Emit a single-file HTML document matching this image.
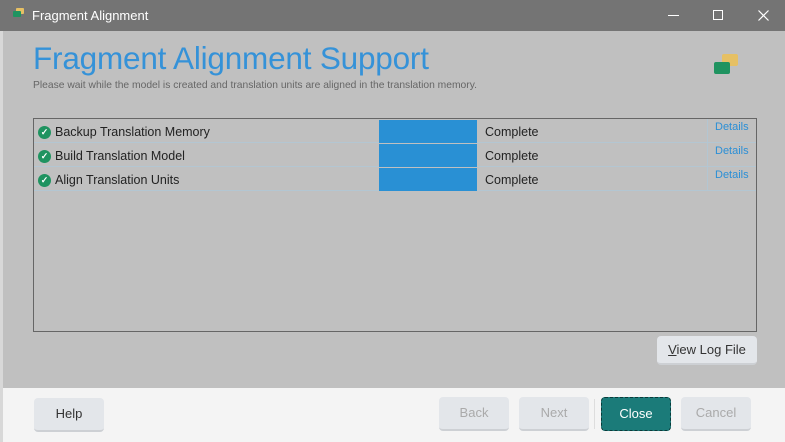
<!DOCTYPE html>
<html><head><style>
*{margin:0;padding:0;box-sizing:border-box}
body{width:785px;height:442px;overflow:hidden;background:#c0c0c0;font-family:"Liberation Sans",sans-serif;position:relative}
.abs{position:absolute}
.title{left:0;top:0;width:785px;height:31px;background:#747474;color:#fff;font-size:13px}
.row{left:34px;width:722px;height:24px;border-bottom:1px solid #b3c6d2;font-size:12.5px;color:#222}
.btn{position:absolute;height:34px;border-radius:4px;background:#e3e6ea;border-bottom:2px solid #cdd0d4;font-size:13px;text-align:center;line-height:32px;color:#333}
</style></head><body>
<div class="abs" style="left:0;top:0;width:3px;height:442px;background:#d8d8d8"></div>
<div class="abs title">
 <div class="abs" style="left:16px;top:8px;width:8px;height:6px;background:#e6c064;border-radius:1px"></div>
 <div class="abs" style="left:13px;top:11px;width:8px;height:6px;background:#1f9360;border-radius:1px"></div>
 <div class="abs" style="left:32px;top:8px">Fragment Alignment</div>
 <div class="abs" style="left:668px;top:15px;width:11px;height:1px;background:#fff"></div>
 <div class="abs" style="left:713px;top:10px;width:10px;height:10px;border:1px solid #fff"></div>
 <svg class="abs" style="left:758px;top:10px" width="11" height="11"><path d="M0.5 0.5L10.5 10.5M10.5 0.5L0.5 10.5" stroke="#fff" stroke-width="1.2"/></svg>
</div>
<div class="abs" style="left:33px;top:40px;font-size:31.5px;color:#3592d8;letter-spacing:-0.2px">Fragment Alignment Support</div>
<div class="abs" style="left:33px;top:80px;font-size:10.3px;color:#666">Please wait while the model is created and translation units are aligned in the translation memory.</div>
<div class="abs" style="left:722px;top:54px;width:16px;height:12px;background:#e6c064;border-radius:2px"></div>
<div class="abs" style="left:714px;top:62px;width:16px;height:12px;background:#1f9360;border-radius:2px"></div>
<div class="abs" style="left:33px;top:118px;width:724px;height:214px;border:1px solid #666"></div>
<div class="abs" style="left:707px;top:119px;width:1px;height:72px;background:#b3c6d2"></div>
<div class="abs row" style="top:119px"></div>
<div class="abs row" style="top:143px"></div>
<div class="abs row" style="top:167px"></div>
<div class="abs" style="left:379px;top:120px;width:98px;height:23px;background:#2990d4"></div>
<div class="abs" style="left:379px;top:144px;width:98px;height:23px;background:#2990d4"></div>
<div class="abs" style="left:379px;top:168px;width:98px;height:23px;background:#2990d4"></div>
<div class="abs" style="left:38px;top:124px;font-size:12.5px;color:#222;line-height:24px">
<div style="position:relative;top:-4px">
<div style="display:flex;align-items:center;height:24px"><span style="width:13px;height:13px;border-radius:50%;background:#1f9360;color:#fff;font-size:9px;line-height:13px;text-align:center;margin-right:4px;font-weight:bold">✓</span>Backup Translation Memory</div>
<div style="display:flex;align-items:center;height:24px"><span style="width:13px;height:13px;border-radius:50%;background:#1f9360;color:#fff;font-size:9px;line-height:13px;text-align:center;margin-right:4px;font-weight:bold">✓</span>Build Translation Model</div>
<div style="display:flex;align-items:center;height:24px"><span style="width:13px;height:13px;border-radius:50%;background:#1f9360;color:#fff;font-size:9px;line-height:13px;text-align:center;margin-right:4px;font-weight:bold">✓</span>Align Translation Units</div>
</div></div>
<div class="abs" style="left:485px;top:125px;font-size:12.5px;color:#222">Complete</div>
<div class="abs" style="left:485px;top:149px;font-size:12.5px;color:#222">Complete</div>
<div class="abs" style="left:485px;top:173px;font-size:12.5px;color:#222">Complete</div>
<div class="abs" style="left:715px;top:121px;font-size:11px;color:#2b8fd6">Details</div>
<div class="abs" style="left:715px;top:145px;font-size:11px;color:#2b8fd6">Details</div>
<div class="abs" style="left:715px;top:169px;font-size:11px;color:#2b8fd6">Details</div>
<div class="btn" style="left:657px;top:336px;width:100px;height:29px;line-height:27px"><u>V</u>iew Log File</div>
<div class="abs" style="left:3px;top:388px;width:782px;height:54px;background:#f4f4f4"></div>
<div class="btn" style="left:34px;top:398px;width:70px">Help</div>
<div class="btn" style="left:439px;top:397px;width:70px;color:#aaa">Back</div>
<div class="btn" style="left:519px;top:397px;width:70px;color:#aaa">Next</div>
<div class="abs" style="left:594px;top:399px;width:1px;height:30px;background:#ddd"></div>
<div class="btn" style="left:601px;top:397px;width:70px;background:#1b7b79;color:#fff;border:1px dashed #0a3a3a">Close</div>
<div class="btn" style="left:681px;top:397px;width:70px;color:#aaa">Cancel</div>
</body></html>
